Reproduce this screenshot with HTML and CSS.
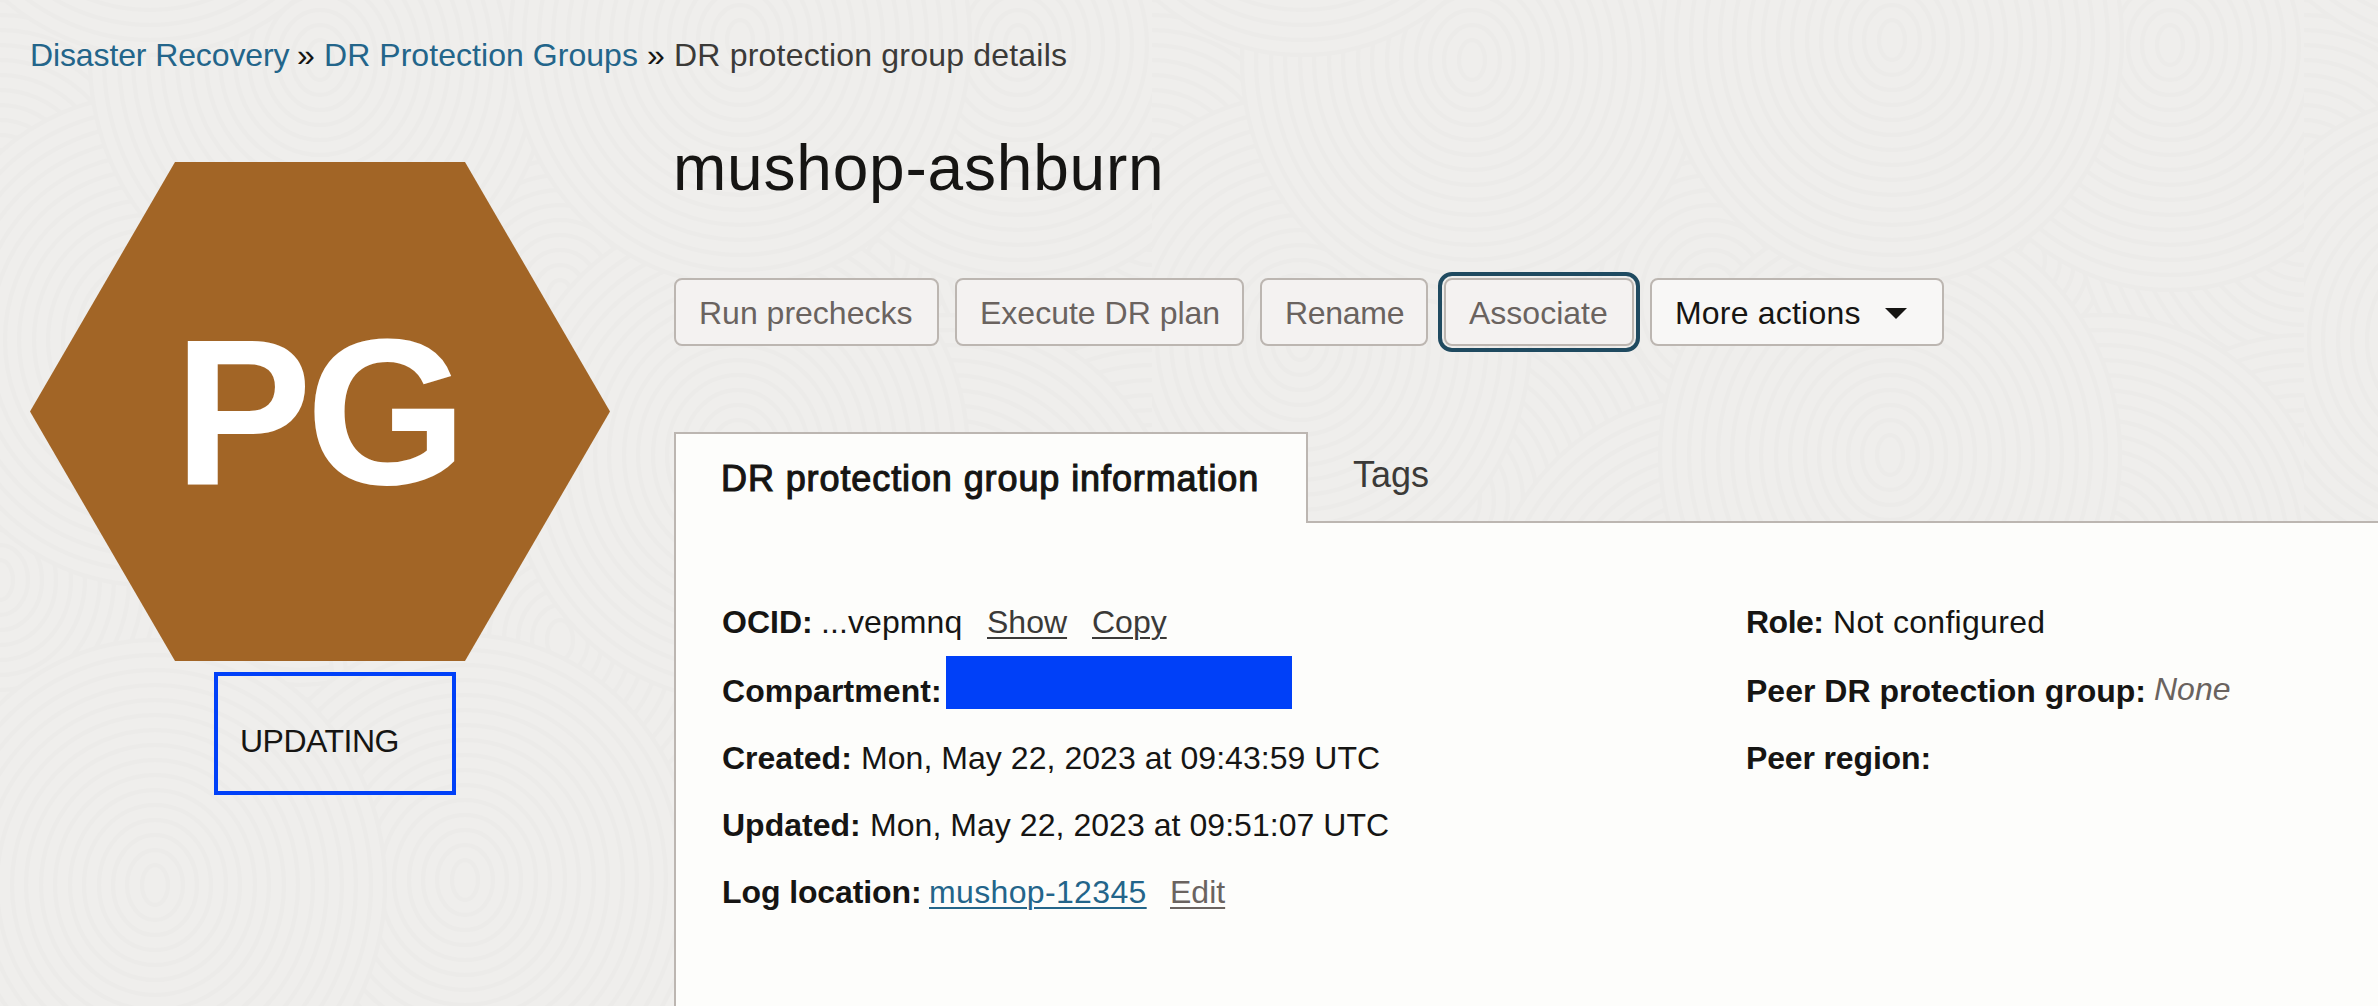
FILE: index.html
```html
<!DOCTYPE html>
<html lang="en">
<head>
<meta charset="utf-8">
<title>DR protection group details</title>
<link rel="stylesheet" href="styles.css">
</head>
<body>
<svg class="backdrop" aria-hidden="true" width="2378" height="1006">
  <defs>
    <g id="rings">
      <ellipse rx="230" ry="245"/><ellipse rx="216" ry="230"/><ellipse rx="201" ry="215"/><ellipse rx="187" ry="200"/><ellipse rx="172" ry="185"/><ellipse rx="158" ry="170"/><ellipse rx="143" ry="155"/><ellipse rx="129" ry="140"/><ellipse rx="114" ry="125"/><ellipse rx="100" ry="110"/><ellipse rx="85" ry="95"/><ellipse rx="71" ry="80"/><ellipse rx="56" ry="65"/><ellipse rx="42" ry="50"/><ellipse rx="28" ry="35"/><ellipse rx="13" ry="20"/>
    </g>
    <pattern id="grain" width="1152" height="1150" patternUnits="userSpaceOnUse">
      <rect width="1152" height="1150" class="ground"/>
      <g class="contour">
        <use href="#rings" x="560" y="300"/><use href="#rings" x="880" y="260"/>
        <use href="#rings" x="0" y="200"/><use href="#rings" x="1152" y="200"/>
        <use href="#rings" x="300" y="500"/><use href="#rings" x="560" y="640"/>
        <use href="#rings" x="0" y="580"/><use href="#rings" x="1152" y="580"/>
        <use href="#rings" x="950" y="560"/><use href="#rings" x="738" y="455"/>
        <use href="#rings" x="148" y="340"/><use href="#rings" x="320" y="60"/>
        <use href="#rings" x="1018" y="45"/><use href="#rings" x="740" y="40"/>
        <use href="#rings" x="150" y="-190"/>
        <use href="#rings" x="465" y="880"/><use href="#rings" x="155" y="885"/>
      </g>
    </pattern>
  </defs>
  <rect width="2378" height="1006" fill="url(#grain)"/>
</svg>
<div class="page">
  <nav class="crumbs">
    <a class="c1">Disaster Recovery</a><span class="sep">»</span><a class="c2">DR Protection Groups</a><span class="sep">»</span><span class="current">DR protection group details</span>
  </nav>
  <div class="layout">
    <aside class="side">
      <div class="hexagon"><span>PG</span></div>
      <div class="status"><span>UPDATING</span></div>
    </aside>
    <main class="main">
      <h1><span>mushop-ashburn</span></h1>
      <div class="actions">
        <button class="btn run"><span>Run prechecks</span></button>
        <button class="btn exec"><span>Execute DR plan</span></button>
        <button class="btn rename"><span>Rename</span></button>
        <button class="btn assoc focused"><span>Associate</span></button>
        <button class="btn more"><span>More actions</span><svg width="22" height="11" viewBox="0 0 22 11"><path d="M0 0H22L11 11Z" fill="#161513"/></svg></button>
      </div>
      <div class="tabs">
        <div class="tab active"><span>DR protection group information</span></div>
        <div class="tab idle"><span>Tags</span></div>
      </div>
      <section class="panel">
        <div class="col">
          <div class="row first"><b class="k1">OCID:</b><span class="v1">...vepmnq</span><a class="show">Show</a><a class="copy">Copy</a></div>
          <div class="row second"><b class="k2">Compartment:</b><i class="redacted"></i></div>
          <div class="row"><b class="k3">Created:</b><span class="v3">Mon, May 22, 2023 at 09:43:59 UTC</span></div>
          <div class="row"><b class="k4">Updated:</b><span class="v4">Mon, May 22, 2023 at 09:51:07 UTC</span></div>
          <div class="row"><b class="k5">Log location:</b><span class="log"><a>mushop-12345</a></span><a class="edit">Edit</a></div>
        </div>
        <div class="col peer">
          <div class="row first"><b class="k6">Role:</b><span class="v6">Not configured</span></div>
          <div class="row second"><b class="k7">Peer DR protection group:</b><em class="none">None</em></div>
          <div class="row"><b class="k8">Peer region:</b></div>
        </div>
      </section>
    </main>
  </div>
</div>
</body>
</html>
```

FILE: styles.css
```css
* { box-sizing: border-box; }
body {
  margin: 0;
  width: 2378px;
  height: 1006px;
  overflow: hidden;
  background: #efeeec;
  color: #161513;
  font: 32px/40px "Liberation Sans", Arial, sans-serif;
}
.backdrop { position: absolute; inset: 0; z-index: -1; }
.ground { fill: #f0efed; }
.contour { fill: #efeeec; stroke: #ecebe9; stroke-width: 4; }
.page { display: flex; flex-direction: column; height: 1006px; }
span, b, a, em { white-space: nowrap; }

.crumbs { display: flex; padding: 35px 0 0 30px; height: 120px; }
.crumbs a { color: #23658a; }
.crumbs .c1 { width: 267px; letter-spacing: -0.12px; }
.crumbs .c2 { width: 323px; letter-spacing: 0.05px; }
.crumbs .sep { width: 27px; }
.crumbs .current { color: #3b3a38; letter-spacing: 0.2px; }

.layout { display: flex; flex: 1; }
.side { flex: none; width: 674px; padding: 42px 0 0 30px; }
.hexagon {
  width: 580px;
  height: 499px;
  background: #a26526;
  clip-path: polygon(25% 0, 75% 0, 100% 50%, 75% 100%, 25% 100%, 0 50%);
  color: #fff;
  font-weight: 700;
  font-size: 207px;
  line-height: 502px;
  letter-spacing: -6px;
  padding-left: 144px;
}
.status {
  width: 242px;
  height: 123px;
  margin: 11px 0 0 184px;
  border: 4px solid #0040f8;
  padding: 45px 0 0 22px;
  letter-spacing: -0.5px;
}

.main { flex: 1; min-width: 0; display: flex; flex-direction: column; }
h1 { margin: 0 0 0 -1px; height: 158px; padding: 8px 0 0; font-weight: 400; font-size: 64px; line-height: 80px; letter-spacing: 0.8px; }
.actions { display: flex; height: 154px; align-items: flex-start; }
.btn {
  flex: none;
  height: 68px;
  border: 2px solid #bcb6b1;
  border-radius: 8px;
  background: #f4f2f1;
  color: #6a635f;
  font: inherit;
  padding: 2px 0 0 23px;
  display: flex;
  align-items: center;
}
.run { width: 265px; margin-right: 16px; }
.exec { width: 289px; margin-right: 16px; }
.rename { width: 168px; margin-right: 16px; letter-spacing: -0.3px; }
.assoc { width: 190px; margin-right: 16px; }
.more { width: 294px; background: #f8f7f6; color: #161513; justify-content: space-between; padding-right: 35px; letter-spacing: 0.2px; }
.focused { outline: 4px solid #1f4a60; outline-offset: 2px; }

.tabs { display: flex; height: 91px; font-size: 36px; border-bottom: 2px solid #bcb6b1; }
.tab { padding: 25px 0 0 45px; }
.active {
  width: 634px;
  height: 91px;
  border: 2px solid #bcb6b1;
  border-bottom: 0;
  background: #fdfdfb;
  letter-spacing: 0.9px;
}
.active span { -webkit-text-stroke: 1.1px #161513; }
.idle { color: #3b3a38; padding-top: 23px; }

.panel { flex: 1; display: flex; background: #fdfdfb; border-left: 2px solid #bcb6b1; padding: 61px 0 0 46px; }
.col { flex: none; width: 1024px; }
.peer { flex: 1; }
.row { display: flex; height: 67px; padding-top: 18px; }
.row.first { height: 68px; }
.row.second { height: 68px; padding-top: 19px; }
a { text-underline-offset: 4px; text-decoration-thickness: 2px; }
.panel a { text-decoration-line: underline; }
.k1 { width: 99px; } .v1 { width: 166px; letter-spacing: 0.1px; }
.show { width: 105px; color: #3b3a38; }
.copy { color: #3b3a38; }
.k2 { width: 224px; letter-spacing: 0.1px; }
.redacted { width: 346px; height: 53px; margin-top: -15px; background: #0040f8; }
.k3 { width: 139px; } .k4 { width: 148px; } .k5 { width: 207px; letter-spacing: -0.1px; }
.v3, .v4 { letter-spacing: 0.05px; }
.log { width: 241px; color: #23658a; letter-spacing: 0.35px; }
.edit { color: #6a635f; }
.k6 { width: 87px; letter-spacing: -0.5px; } .k7 { width: 408px; }
.k8 { letter-spacing: -0.15px; }
.v6 { letter-spacing: 0.3px; }
.none { color: #6a635f; margin-top: -2px; }
```
